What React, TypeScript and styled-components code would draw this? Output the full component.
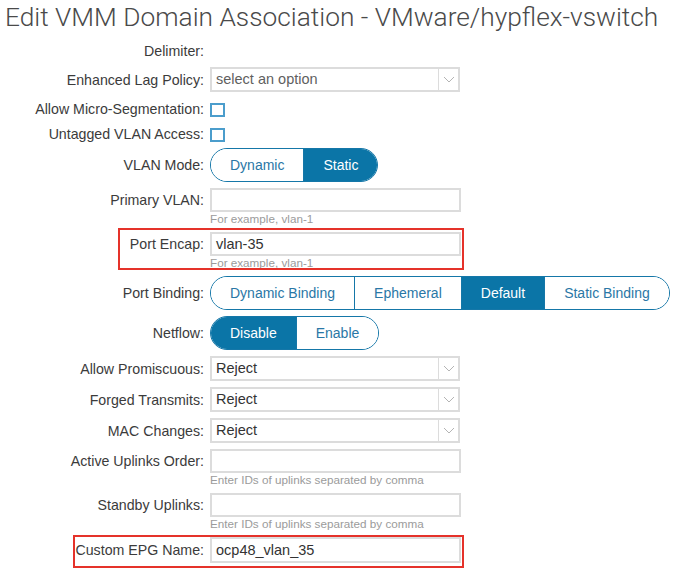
import styled, { createGlobalStyle } from "styled-components";

const GlobalStyle = createGlobalStyle`
  body {
    margin: 0;
    background: #fff;
    font-family: "Liberation Sans", Arial, sans-serif;
  }
`;

const Page = styled.div`
  width: 680px;
  height: 572px;
  overflow: hidden;
  padding-top: 1px;
  box-sizing: border-box;
`;

const Title = styled.h1`
  margin: 0 0 9px 0;
  padding-left: 5px;
  font-family: Roboto, "Liberation Sans", sans-serif;
  font-weight: 300;
  font-size: 26.3px;
  line-height: 32px;
  color: #4a4a4a;
  white-space: nowrap;
`;

const Form = styled.div`
  display: flex;
  flex-direction: column;
  gap: 6px;
`;

const Row = styled.div<{ $align?: string; $h?: number }>`
  position: relative;
  display: grid;
  grid-template-columns: 204px auto;
  column-gap: 6px;
  align-items: ${(p) => p.$align ?? "start"};
  ${(p) => (p.$h ? `height: ${p.$h}px;` : "")}
`;

const Label = styled.div<{ $h?: number }>`
  text-align: right;
  font-size: 14.2px;
  color: #3b3b3b;
  white-space: nowrap;
  line-height: ${(p) => p.$h ?? 24}px;
`;

const Field = styled.div`
  display: flex;
  flex-direction: column;
  align-items: flex-start;
`;

const TextBox = styled.div<{ $h?: number }>`
  box-sizing: border-box;
  width: 251px;
  height: ${(p) => p.$h ?? 24}px;
  border: 2px solid #dcdcdc;
  padding: 0 4px;
  font-size: 14.5px;
  line-height: ${(p) => (p.$h ?? 24) - 4}px;
  color: #333;
`;

const Hint = styled.div`
  font-size: 11.7px;
  line-height: 14px;
  color: #9b9b9b;
  white-space: nowrap;
`;

const SelectBox = styled.div<{ $muted?: boolean }>`
  box-sizing: border-box;
  width: 250px;
  height: 25px;
  border: 2px solid #dcdcdc;
  display: flex;
  font-size: 14.5px;
  color: ${(p) => (p.$muted ? "#5f5f5f" : "#333")};
`;

const SelectValue = styled.div`
  flex: 1;
  padding-left: 4px;
  line-height: 21px;
`;

const Caret = styled.div`
  width: 19px;
  border-left: 1px solid #dcdcdc;
  display: flex;
  align-items: center;
  justify-content: center;
`;

const Checkbox = styled.div`
  box-sizing: border-box;
  width: 15px;
  height: 14px;
  border: 2px solid #4b9dcc;
  background: #fff;
`;

const Toggle = styled.div`
  display: inline-flex;
  height: 34px;
  box-sizing: border-box;
  border: 1.5px solid #1577a8;
  border-radius: 17px;
  overflow: hidden;
  justify-self: start;
`;

const Segment = styled.div<{ $active?: boolean }>`
  padding: 0 19px;
  display: flex;
  align-items: center;
  font-size: 14px;
  white-space: nowrap;
  color: ${(p) => (p.$active ? "#fff" : "#2a77a6")};
  background: ${(p) => (p.$active ? "#0b75a7" : "#fff")};
  & + & {
    border-left: 1px solid #1577a8;
  }
`;

const Highlight = styled.div<{ $left: number; $top: number; $bottom: number }>`
  position: absolute;
  left: ${(p) => p.$left}px;
  width: ${(p) => 464 - p.$left}px;
  top: ${(p) => p.$top}px;
  bottom: ${(p) => p.$bottom}px;
  border: 2px solid #e5322a;
  box-sizing: border-box;
  pointer-events: none;
`;

function Chevron() {
  return (
    <svg width="12" height="7" viewBox="0 0 12 7">
      <polyline points="1,1 6,6 11,1" fill="none" stroke="#b4b4b4" strokeWidth="1" />
    </svg>
  );
}

function Select({ value, muted }: { value: string; muted?: boolean }) {
  return (
    <SelectBox $muted={muted}>
      <SelectValue>{value}</SelectValue>
      <Caret>
        <Chevron />
      </Caret>
    </SelectBox>
  );
}

function SegmentGroup({ options, active }: { options: string[]; active: string }) {
  return (
    <Toggle>
      {options.map((o) => (
        <Segment key={o} $active={o === active}>
          {o}
        </Segment>
      ))}
    </Toggle>
  );
}

export default function App() {
  return (
    <Page>
      <GlobalStyle />
      <Title>Edit VMM Domain Association - VMware/hypflex-vswitch</Title>
      <Form>
        <Row $h={19}>
          <Label $h={19}>Delimiter:</Label>
        </Row>
        <Row $align="center">
          <Label>Enhanced Lag Policy:</Label>
          <Select value="select an option" muted />
        </Row>
        <Row $align="end" $h={19}>
          <Label $h={15}>Allow Micro-Segmentation:</Label>
          <Checkbox />
        </Row>
        <Row $align="end" $h={19}>
          <Label $h={15}>Untagged VLAN Access:</Label>
          <Checkbox />
        </Row>
        <Row $align="center">
          <Label>VLAN Mode:</Label>
          <SegmentGroup options={["Dynamic", "Static"]} active="Static" />
        </Row>
        <Row>
          <Label>Primary VLAN:</Label>
          <Field>
            <TextBox />
            <Hint>For example, vlan-1</Hint>
          </Field>
        </Row>
        <Row>
          <Label>Port Encap:</Label>
          <Field>
            <TextBox>vlan-35</TextBox>
            <Hint>For example, vlan-1</Hint>
          </Field>
          <Highlight $left={118} $top={-4} $bottom={0} />
        </Row>
        <Row $align="center">
          <Label>Port Binding:</Label>
          <SegmentGroup
            options={["Dynamic Binding", "Ephemeral", "Default", "Static Binding"]}
            active="Default"
          />
        </Row>
        <Row $align="center">
          <Label>Netflow:</Label>
          <SegmentGroup options={["Disable", "Enable"]} active="Disable" />
        </Row>
        <Row $align="center">
          <Label>Allow Promiscuous:</Label>
          <Select value="Reject" />
        </Row>
        <Row $align="center">
          <Label>Forged Transmits:</Label>
          <Select value="Reject" />
        </Row>
        <Row $align="center">
          <Label>MAC Changes:</Label>
          <Select value="Reject" />
        </Row>
        <Row>
          <Label>Active Uplinks Order:</Label>
          <Field>
            <TextBox />
            <Hint>Enter IDs of uplinks separated by comma</Hint>
          </Field>
        </Row>
        <Row>
          <Label>Standby Uplinks:</Label>
          <Field>
            <TextBox />
            <Hint>Enter IDs of uplinks separated by comma</Hint>
          </Field>
        </Row>
        <Row $align="center">
          <Label>Custom EPG Name:</Label>
          <Field>
            <TextBox $h={26}>ocp48_vlan_35</TextBox>
          </Field>
          <Highlight $left={73} $top={-2} $bottom={-5} />
        </Row>
      </Form>
    </Page>
  );
}
